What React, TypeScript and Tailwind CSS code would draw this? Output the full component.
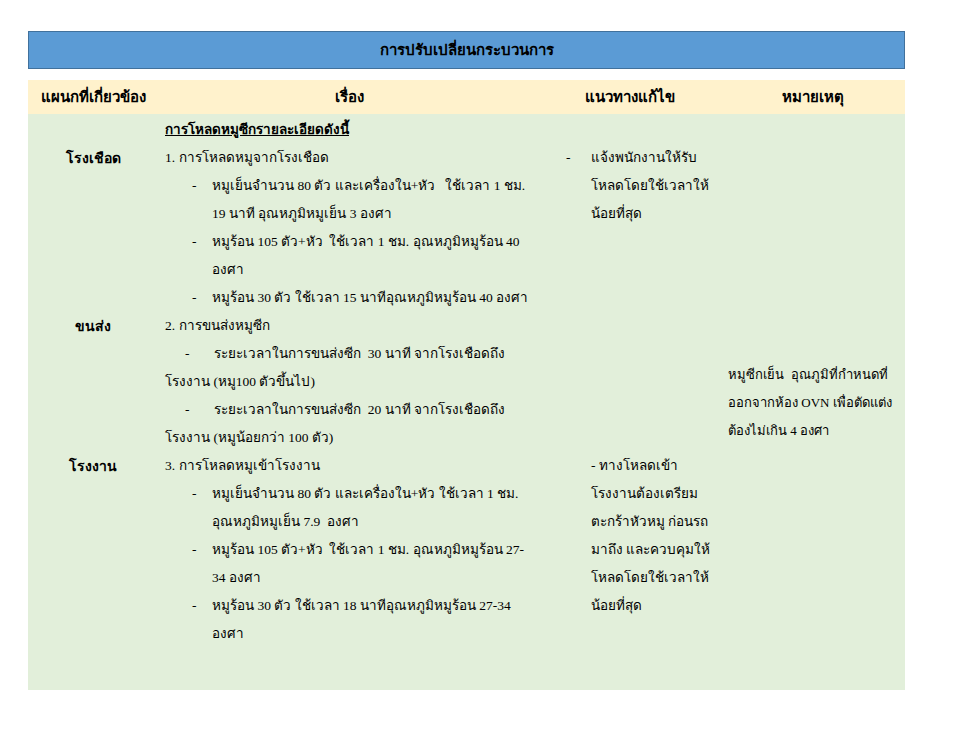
const FONT = 'font-["Liberation_Serif",serif]';

type Line = { text: string; dash?: 1 | 2; indent?: boolean };

const SECTIONS: { dept: string; lines: Line[]; fix: Line[] }[] = [
  {
    dept: 'โรงเชือด',
    lines: [
      { text: '1. การโหลดหมูจากโรงเชือด' },
      { text: 'หมูเย็นจำนวน 80 ตัว และเครื่องใน+หัว   ใช้เวลา 1 ชม.', dash: 1 },
      { text: '19 นาที อุณหภูมิหมูเย็น 3 องศา', indent: true },
      { text: 'หมูร้อน 105 ตัว+หัว  ใช้เวลา 1 ชม. อุณหภูมิหมูร้อน 40', dash: 1 },
      { text: 'องศา', indent: true },
      { text: 'หมูร้อน 30 ตัว ใช้เวลา 15 นาทีอุณหภูมิหมูร้อน 40 องศา', dash: 1 },
    ],
    fix: [
      { text: 'แจ้งพนักงานให้รับ', dash: 1 },
      { text: 'โหลดโดยใช้เวลาให้' },
      { text: 'น้อยที่สุด' },
    ],
  },
  {
    dept: 'ขนส่ง',
    lines: [
      { text: '2. การขนส่งหมูซีก' },
      { text: 'ระยะเวลาในการขนส่งซีก  30 นาที จากโรงเชือดถึง', dash: 2 },
      { text: 'โรงงาน (หมู100 ตัวขึ้นไป)' },
      { text: 'ระยะเวลาในการขนส่งซีก  20 นาที จากโรงเชือดถึง', dash: 2 },
      { text: 'โรงงาน (หมูน้อยกว่า 100 ตัว)' },
    ],
    fix: [],
  },
  {
    dept: 'โรงงาน',
    lines: [
      { text: '3. การโหลดหมูเข้าโรงงาน' },
      { text: 'หมูเย็นจำนวน 80 ตัว และเครื่องใน+หัว ใช้เวลา 1 ชม.', dash: 1 },
      { text: 'อุณหภูมิหมูเย็น 7.9  องศา', indent: true },
      { text: 'หมูร้อน 105 ตัว+หัว  ใช้เวลา 1 ชม. อุณหภูมิหมูร้อน 27-', dash: 1 },
      { text: '34 องศา', indent: true },
      { text: 'หมูร้อน 30 ตัว ใช้เวลา 18 นาทีอุณหภูมิหมูร้อน 27-34', dash: 1 },
      { text: 'องศา', indent: true },
    ],
    fix: [
      { text: '- ทางโหลดเข้า' },
      { text: 'โรงงานต้องเตรียม' },
      { text: 'ตะกร้าหัวหมู ก่อนรถ' },
      { text: 'มาถึง และควบคุมให้' },
      { text: 'โหลดโดยใช้เวลาให้' },
      { text: 'น้อยที่สุด' },
    ],
  },
];

function StoryLine({ line }: { line: Line }) {
  if (line.dash) {
    return (
      <div className="flex h-[28px] items-center whitespace-pre">
        <span className={line.dash === 1 ? 'w-[47px] shrink-0 pl-[27px]' : 'w-[49px] shrink-0 pl-[20px]'}>-</span>
        <span>{line.text}</span>
      </div>
    );
  }
  return (
    <div className={`flex h-[28px] items-center whitespace-pre ${line.indent ? 'pl-[47px]' : ''}`}>
      {line.text}
    </div>
  );
}

function FixLine({ line }: { line: Line }) {
  if (line.dash) {
    return (
      <div className="flex h-[28px] items-center whitespace-pre">
        <span className="w-[51px] shrink-0 pl-[26px]">-</span>
        <span>{line.text}</span>
      </div>
    );
  }
  return <div className="flex h-[28px] items-center whitespace-pre pl-[51px]">{line.text}</div>;
}

export default function App() {
  return (
    <div className={`min-h-[730px] w-[960px] bg-white pt-[31px] text-[13.5px] text-black ${FONT}`}>
      <div className="mx-[28px] w-[877px]">
        <div className="flex h-[38px] items-center justify-center border border-[#41719c] bg-[#5b9bd5] text-[15px] font-bold">
          การปรับเปลี่ยนกระบวนการ
        </div>

        <div className="mt-[11px] grid h-[34px] grid-cols-[130px_382px_180px_185px] items-center bg-[#fff2cc] text-[15px] font-bold">
          <div className="text-center">แผนกที่เกี่ยวข้อง</div>
          <div className="text-center">เรื่อง</div>
          <div className="text-center">แนวทางแก้ไข</div>
          <div className="text-center">หมายเหตุ</div>
        </div>

        <div className="flex h-[576px] bg-[#e2efda] pt-[2px]">
          <div className="grid w-[692px] grid-cols-[130px_382px_180px] content-start">
            <div />
            <div className="flex h-[28px] items-center pl-[7px] font-bold underline">
              การโหลดหมูซีกรายละเอียดดังนี้
            </div>
            <div />

            {SECTIONS.map((s) => (
              <div key={s.dept} className="contents">
                <div className="flex h-[28px] items-center justify-center text-[14px] font-bold">{s.dept}</div>
                <div className="pl-[7px]">
                  {s.lines.map((l, i) => (
                    <StoryLine key={i} line={l} />
                  ))}
                </div>
                <div>
                  {s.fix.map((l, i) => (
                    <FixLine key={i} line={l} />
                  ))}
                </div>
              </div>
            ))}
          </div>

          <div className="flex w-[185px] items-center pl-[8px] text-[13px]">
            <div className="leading-[28px]">
              <div className="whitespace-pre">หมูซีกเย็น  อุณภูมิที่กำหนดที่</div>
              <div className="whitespace-pre">ออกจากห้อง OVN เพื่อตัดแต่ง</div>
              <div className="whitespace-pre">ต้องไม่เกิน 4 องศา</div>
            </div>
          </div>
        </div>
      </div>
    </div>
  );
}
